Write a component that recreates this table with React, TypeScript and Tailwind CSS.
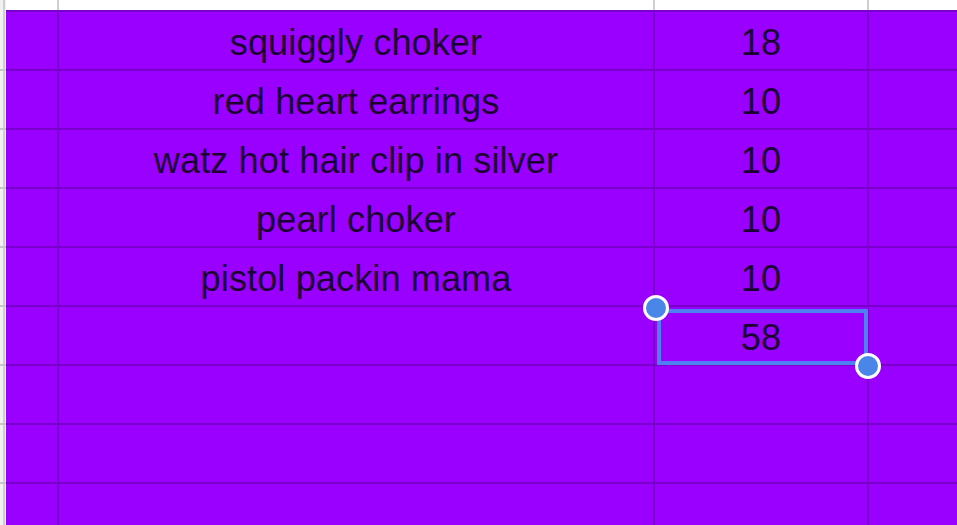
import React from "react";

const rows: [string, string][] = [
  ["squiggly choker", "18"],
  ["red heart earrings", "10"],
  ["watz hot hair clip in silver", "10"],
  ["pearl choker", "10"],
  ["pistol packin mama", "10"],
  ["", "58"],
  ["", ""],
  ["", ""],
  ["", ""],
];

export default function App() {
  return (
    <div
      className="relative w-[957px] h-[525px] overflow-hidden bg-white"
      style={{ fontFamily: '"Liberation Sans", Arial, sans-serif' }}
    >
      {/* top strip (previous row, cut off) */}
      <div className="flex h-[10px]">
        <div className="w-[6px] flex-none flex">
          <div className="w-[3px] bg-[#f1f1f1]" />
          <div className="w-[2px] bg-[#cfcfcf]" />
          <div className="w-[1px] bg-[#f1f1f1]" />
        </div>
        <div className="w-[53px] flex-none border-r-2 border-[#d0d0d0]" />
        <div className="w-[596px] flex-none border-r-2 border-[#d0d0d0]" />
        <div className="w-[214px] flex-none border-r-2 border-[#d0d0d0]" />
        <div className="flex-1" />
      </div>

      <div className="flex">
        {/* row header strip */}
        <div className="w-[6px] flex-none flex">
          <div className="w-[3px] bg-[#f1f1f1]" />
          <div className="w-[2px] bg-[#cfcfcf]" />
          <div className="w-[1px] bg-[#f1f1f1]" />
        </div>

        {/* purple grid */}
        <div className="flex-1 bg-[#9900ff] border-t-2 border-[#7a00cc]">
          {rows.map(([name, qty], i) => (
            <div key={i} className="flex h-[59px] border-b-2 border-[#7a00cc]">
              <div className="w-[53px] flex-none border-r-2 border-[#7a00cc]" />
              <div className="w-[596px] flex-none border-r-2 border-[#7a00cc] flex items-center justify-center text-[36px] leading-none tracking-[0.15px] text-[#1c0033] pt-[4px]">
                {name}
              </div>
              <div className="w-[214px] flex-none border-r-2 border-[#7a00cc] flex items-center justify-center text-[36px] leading-none tracking-[0.15px] text-[#1c0033] pt-[4px]">
                {qty}
              </div>
              <div className="flex-1" />
            </div>
          ))}
        </div>
      </div>

      {/* row header ticks */}
      {[69, 128, 187, 246, 305, 364, 423, 482].map((y) => (
        <div key={y} className="absolute left-0 w-[6px] h-[2px] bg-[#c8c8c8]" style={{ top: y }} />
      ))}

      {/* selection */}
      <div className="absolute left-[657px] top-[309px] w-[211px] h-[56px] border-4 border-[#4f80f2]" />
      <div className="absolute left-[643px] top-[295px] w-[26px] h-[26px] rounded-full bg-[#4a86e8] border-[3px] border-white" />
      <div className="absolute left-[855px] top-[353px] w-[26px] h-[26px] rounded-full bg-[#4a86e8] border-[3px] border-white" />
    </div>
  );
}
